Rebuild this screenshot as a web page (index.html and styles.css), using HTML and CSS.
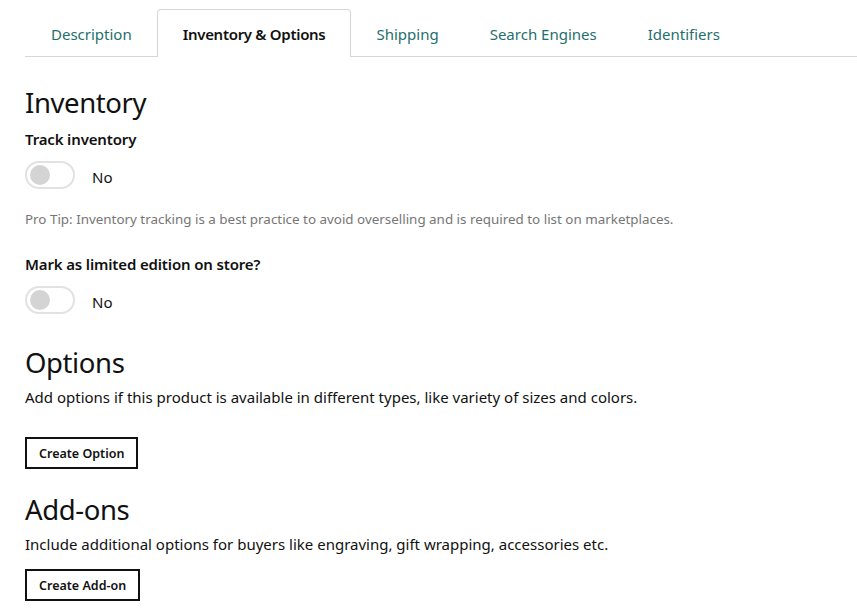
FILE: index.html
```html
<!DOCTYPE html>
<html lang="en">
<head>
  <meta charset="UTF-8">
  <meta name="viewport" content="width=device-width, initial-scale=1.0">
  <title>Inventory &amp; Options</title>
  <link rel="stylesheet" href="styles.css">
</head>
<body>
  <div class="page">
    <ul class="tabs">
      <li class="tab">Description</li>
      <li class="tab active">Inventory &amp; Options</li>
      <li class="tab">Shipping</li>
      <li class="tab">Search Engines</li>
      <li class="tab">Identifiers</li>
    </ul>

    <section class="inventory">
      <h2>Inventory</h2>
      <div class="field">
        <div class="label">Track inventory</div>
        <div class="switch-row">
          <span class="switch"><span class="knob"></span></span>
          <span class="switch-text">No</span>
        </div>
      </div>
      <p class="tip">Pro Tip: Inventory tracking is a best practice to avoid overselling and is required to list on marketplaces.</p>
      <div class="field">
        <div class="label">Mark as limited edition on store?</div>
        <div class="switch-row">
          <span class="switch"><span class="knob"></span></span>
          <span class="switch-text">No</span>
        </div>
      </div>
    </section>

    <section class="options">
      <h2>Options</h2>
      <p class="desc">Add options if this product is available in different types, like variety of sizes and colors.</p>
      <button class="btn">Create Option</button>
    </section>

    <section class="addons">
      <h2>Add-ons</h2>
      <p class="desc">Include additional options for buyers like engraving, gift wrapping, accessories etc.</p>
      <button class="btn">Create Add-on</button>
    </section>
  </div>
</body>
</html>
```

FILE: styles.css
```css
body {
  margin: 0;
  padding: 0;
  background-color: #fff;
  font-family: "Noto Sans", "Open Sans", sans-serif;
  color: #111;
}

.page {
  padding: 9px 0 0 25px;
}

.tabs {
  display: flex;
  list-style: none;
  margin: 0;
  padding: 0;
  border-bottom: 1px solid #d6d6d6;
}

.tab {
  height: 46px;
  line-height: 48px;
  padding: 0 25px;
  font-size: 15px;
  color: #1f6f6d;
  border: 1px solid transparent;
  border-bottom: none;
  border-radius: 4px 4px 0 0;
  margin-bottom: -1px;
}

.tab.active {
  color: #111;
  font-weight: 600;
  letter-spacing: -0.3px;
  background-color: #fff;
  border-color: #d6d6d6;
  height: 47px;
}

.tab + .tab {
  margin-left: -1px;
}

h2 {
  margin: 0;
  font-size: 27.5px;
  font-weight: 400;
  line-height: 36px;
  letter-spacing: -0.4px;
}

.inventory h2 {
  margin-top: 28px;
}

.label {
  font-size: 15px;
  font-weight: 600;
  line-height: 20px;
  letter-spacing: -0.15px;
  margin-top: 8px;
}

.switch-row {
  display: flex;
  align-items: center;
  margin-top: 12px;
}

.switch {
  display: flex;
  align-items: center;
  box-sizing: border-box;
  width: 50px;
  height: 28px;
  border: 2px solid #e2e2e2;
  border-radius: 14px;
  padding-left: 3px;
}

.knob {
  width: 20px;
  height: 20px;
  border-radius: 50%;
  background-color: #d4d4d4;
}

.switch-text {
  margin-left: 17px;
  font-size: 15px;
  padding-top: 4px;
}

.tip {
  margin: 21px 0 0;
  font-size: 13.4px;
  line-height: 18px;
  color: #767676;
}

.tip + .field {
  margin-top: 26px;
}

.options h2 {
  margin-top: 31px;
}

.desc {
  margin: 6px 0 0;
  font-size: 15px;
  line-height: 20px;
}

.btn {
  display: block;
  margin-top: 30px;
  height: 32px;
  padding: 0 12px;
  background-color: #fff;
  border: 2px solid #111;
  border-radius: 0;
  font-family: inherit;
  font-size: 12.5px;
  font-weight: 600;
  color: #111;
  cursor: pointer;
}

.addons h2 {
  margin-top: 23px;
}

.addons .btn {
  margin-top: 15px;
}
```
